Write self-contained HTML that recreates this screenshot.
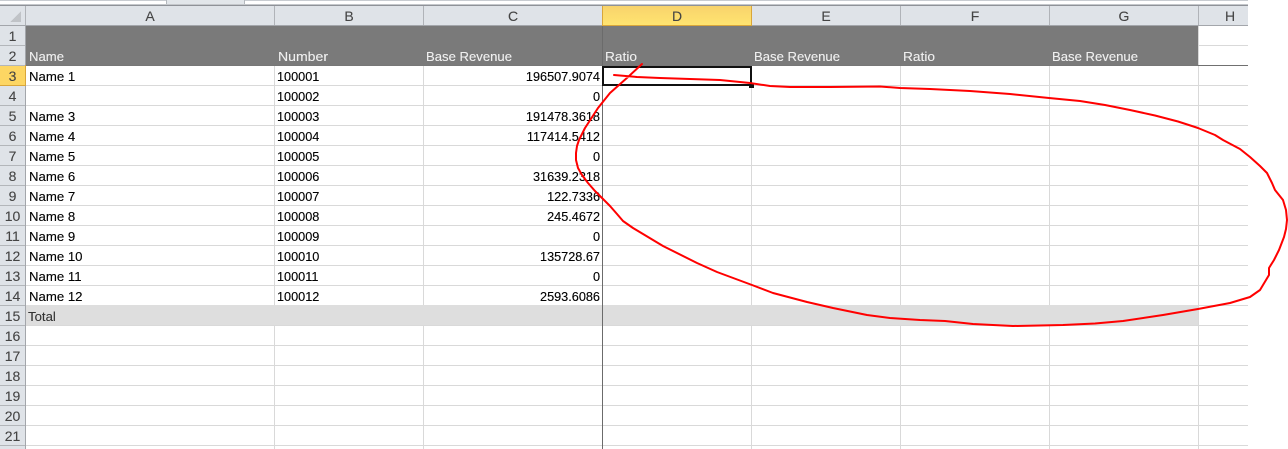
<!DOCTYPE html>
<html><head><meta charset="utf-8"><style>
html,body{margin:0;padding:0;background:#fff;width:1288px;height:449px;overflow:hidden}
svg{display:block}
text{font-family:"Liberation Sans",sans-serif;font-size:13.2px}
.h{fill:#f0f0f0;stroke:#f0f0f0;stroke-width:.12}
.c{fill:#000;stroke:#000;stroke-width:.12}
.d{font-size:12.7px}
.r{fill:#444;stroke:#444;stroke-width:.1;text-anchor:middle;font-size:14px}
.n{text-anchor:end}
</style></head><body>
<svg width="1288" height="449" viewBox="0 0 1288 449" xmlns="http://www.w3.org/2000/svg">
<defs>
<linearGradient id="hd" x1="0" y1="0" x2="0" y2="1"><stop offset="0" stop-color="#f8d36c"/><stop offset="1" stop-color="#ffe470"/></linearGradient>
</defs>
<g shape-rendering="crispEdges">
<!-- top strip -->
<rect x="0" y="0" width="1248" height="1" fill="#c8ccd1"/>
<rect x="166" y="0" width="78" height="4" fill="#e2e6ea"/>
<rect x="166" y="0" width="1" height="4" fill="#b4b8bd"/>
<rect x="244" y="0" width="1" height="4" fill="#b4b8bd"/>
<rect x="0" y="4" width="1248" height="1" fill="#c4c7cb"/>
<rect x="0" y="5" width="1248" height="1" fill="#8f9298"/>
<!-- column header -->
<rect x="0" y="6" width="1248" height="19" fill="#dfe3e8"/>
<rect x="0" y="25" width="1248" height="1" fill="#a3a6ab"/>
<rect x="603" y="6" width="148" height="19" fill="url(#hd)"/>
<rect x="602" y="25" width="150" height="1" fill="#d9a63a"/>
<rect x="602" y="6" width="1" height="19" fill="#d9a63a"/>
<rect x="751" y="6" width="1" height="19" fill="#d9a63a"/>
<rect x="274" y="6" width="1" height="19" fill="#b0b3b8"/>
<rect x="423" y="6" width="1" height="19" fill="#b0b3b8"/>
<rect x="900" y="6" width="1" height="19" fill="#b0b3b8"/>
<rect x="1049" y="6" width="1" height="19" fill="#b0b3b8"/>
<rect x="1198" y="6" width="1" height="19" fill="#b0b3b8"/>
<rect x="25" y="6" width="1" height="19" fill="#b0b3b8"/>
<polygon points="10,22 21,22 21,11" fill="#c0c3c7"/>
<!-- row header -->
<rect x="0" y="26" width="25" height="423" fill="#dfe3e8"/>
<rect x="25" y="26" width="1" height="423" fill="#a3a6ab"/>
<rect x="0" y="66" width="25" height="19" fill="#fdd663"/>
<rect x="25" y="65" width="1" height="21" fill="#d9a63a"/>
<rect x="0" y="85" width="26" height="1" fill="#d9a63a"/>
<g fill="#b3b6ba">
<rect x="0" y="45" width="25" height="1"/><rect x="0" y="65" width="25" height="1"/>
<rect x="0" y="105" width="25" height="1"/><rect x="0" y="125" width="25" height="1"/>
<rect x="0" y="145" width="25" height="1"/><rect x="0" y="165" width="25" height="1"/>
<rect x="0" y="185" width="25" height="1"/><rect x="0" y="205" width="25" height="1"/>
<rect x="0" y="225" width="25" height="1"/><rect x="0" y="245" width="25" height="1"/>
<rect x="0" y="265" width="25" height="1"/><rect x="0" y="285" width="25" height="1"/>
<rect x="0" y="305" width="25" height="1"/><rect x="0" y="325" width="25" height="1"/>
<rect x="0" y="345" width="25" height="1"/><rect x="0" y="365" width="25" height="1"/>
<rect x="0" y="385" width="25" height="1"/><rect x="0" y="405" width="25" height="1"/>
<rect x="0" y="425" width="25" height="1"/><rect x="0" y="445" width="25" height="1"/>
</g>
<!-- gridlines -->
<g fill="#d9d9d9">
<rect x="1198" y="45" width="50" height="1"/>
<rect x="26" y="85" width="1222" height="1"/><rect x="26" y="105" width="1222" height="1"/>
<rect x="26" y="125" width="1222" height="1"/><rect x="26" y="145" width="1222" height="1"/>
<rect x="26" y="165" width="1222" height="1"/><rect x="26" y="185" width="1222" height="1"/>
<rect x="26" y="205" width="1222" height="1"/><rect x="26" y="225" width="1222" height="1"/>
<rect x="26" y="245" width="1222" height="1"/><rect x="26" y="265" width="1222" height="1"/>
<rect x="26" y="285" width="1222" height="1"/><rect x="26" y="305" width="1222" height="1"/>
<rect x="26" y="325" width="1222" height="1"/><rect x="26" y="345" width="1222" height="1"/>
<rect x="26" y="365" width="1222" height="1"/><rect x="26" y="385" width="1222" height="1"/>
<rect x="26" y="405" width="1222" height="1"/><rect x="26" y="425" width="1222" height="1"/>
<rect x="26" y="445" width="1222" height="1"/>
<rect x="274" y="66" width="1" height="383"/><rect x="423" y="66" width="1" height="383"/>
<rect x="751" y="66" width="1" height="383"/><rect x="900" y="66" width="1" height="383"/>
<rect x="1049" y="66" width="1" height="383"/><rect x="1198" y="26" width="1" height="423"/>
</g>
<!-- bands -->
<rect x="26" y="26" width="1172" height="39" fill="#7a7a7a"/>
<rect x="1198" y="65" width="50" height="1" fill="#707070"/>
<rect x="26" y="65" width="1172" height="1" fill="#777"/>
<rect x="26" y="305" width="1172" height="20" fill="#dedede"/>
<rect x="602" y="26" width="1" height="423" fill="#6b6b6b"/>
<!-- selection -->
<rect x="602" y="66" width="150" height="2" fill="#111"/>
<rect x="602" y="84" width="150" height="2" fill="#111"/>
<rect x="602" y="66" width="2" height="20" fill="#111"/>
<rect x="750" y="66" width="2" height="20" fill="#111"/>
<rect x="749" y="84" width="5" height="4" fill="#111"/>
</g>
<!-- column letters -->
<text class="r" x="150" y="21">A</text><text class="r" x="349" y="21">B</text><text class="r" x="513" y="21">C</text>
<text class="r" x="677" y="21">D</text><text class="r" x="826" y="21">E</text><text class="r" x="975" y="21">F</text>
<text class="r" x="1124" y="21">G</text><text class="r" x="1230" y="21">H</text>
<!-- row numbers -->
<text class="r" x="12.5" y="41">1</text><text class="r" x="12.5" y="61">2</text><text class="r" x="12.5" y="81">3</text>
<text class="r" x="12.5" y="101">4</text><text class="r" x="12.5" y="121">5</text><text class="r" x="12.5" y="141">6</text>
<text class="r" x="12.5" y="161">7</text><text class="r" x="12.5" y="181">8</text><text class="r" x="12.5" y="201">9</text>
<text class="r" x="12.5" y="221">10</text><text class="r" x="12.5" y="241">11</text><text class="r" x="12.5" y="261">12</text>
<text class="r" x="12.5" y="281">13</text><text class="r" x="12.5" y="301">14</text><text class="r" x="12.5" y="321">15</text>
<text class="r" x="12.5" y="341">16</text><text class="r" x="12.5" y="361">17</text><text class="r" x="12.5" y="381">18</text>
<text class="r" x="12.5" y="401">19</text><text class="r" x="12.5" y="421">20</text><text class="r" x="12.5" y="441">21</text>
<!-- header labels -->
<text class="h" x="29" y="61" textLength="35" lengthAdjust="spacingAndGlyphs">Name</text>
<text class="h" x="278" y="61" textLength="50" lengthAdjust="spacingAndGlyphs">Number</text>
<text class="h" x="426" y="61" textLength="86" lengthAdjust="spacingAndGlyphs">Base Revenue</text>
<text class="h" x="605" y="61" textLength="32" lengthAdjust="spacingAndGlyphs">Ratio</text>
<text class="h" x="754" y="61" textLength="86" lengthAdjust="spacingAndGlyphs">Base Revenue</text>
<text class="h" x="903" y="61" textLength="32" lengthAdjust="spacingAndGlyphs">Ratio</text>
<text class="h" x="1052" y="61" textLength="86" lengthAdjust="spacingAndGlyphs">Base Revenue</text>
<!-- names -->
<text class="c" x="29" y="81">Name 1</text><text class="c" x="29" y="121">Name 3</text><text class="c" x="29" y="141">Name 4</text>
<text class="c" x="29" y="161">Name 5</text><text class="c" x="29" y="181">Name 6</text><text class="c" x="29" y="201">Name 7</text>
<text class="c" x="29" y="221">Name 8</text><text class="c" x="29" y="241">Name 9</text><text class="c" x="29" y="261">Name 10</text>
<text class="c" x="29" y="281">Name 11</text><text class="c" x="29" y="301">Name 12</text>
<text x="28" y="321" fill="#333" stroke="#333" stroke-width=".1">Total</text>
<!-- numbers -->
<text class="c d" x="277" y="81">100001</text><text class="c d" x="277" y="101">100002</text><text class="c d" x="277" y="121">100003</text>
<text class="c d" x="277" y="141">100004</text><text class="c d" x="277" y="161">100005</text><text class="c d" x="277" y="181">100006</text>
<text class="c d" x="277" y="201">100007</text><text class="c d" x="277" y="221">100008</text><text class="c d" x="277" y="241">100009</text>
<text class="c d" x="277" y="261">100010</text><text class="c d" x="277" y="281">100011</text><text class="c d" x="277" y="301">100012</text>
<!-- revenue -->
<text class="c d n" x="600" y="81">196507.9074</text><text class="c d n" x="600" y="101">0</text><text class="c d n" x="600" y="121">191478.3618</text>
<text class="c d n" x="600" y="141">117414.5412</text><text class="c d n" x="600" y="161">0</text><text class="c d n" x="600" y="181">31639.2318</text>
<text class="c d n" x="600" y="201">122.7336</text><text class="c d n" x="600" y="221">245.4672</text><text class="c d n" x="600" y="241">0</text>
<text class="c d n" x="600" y="261">135728.67</text><text class="c d n" x="600" y="281">0</text><text class="c d n" x="600" y="301">2593.6086</text>
<!-- red annotation -->
<path fill="none" stroke="#f00" stroke-width="2" stroke-linejoin="round" stroke-linecap="round" d="M614 75 L637 77 L660 78 L690 79 L720 80 L750 83 L770 86 L790 87 L830 87 L880 86.5 L900 88 L930 89 L970 91 L1010 94 L1049 98 L1080 101 L1105 105 L1130 110 L1155 115.5 L1178 121.5 L1198 128 L1215 135 L1223 140 L1240 149 L1250 157 L1260 166 L1267 173 L1272 183 L1275 190 L1283 200 L1286 210 L1287 220 L1286 229 L1284 237 L1279 250 L1274 260 L1269 268 L1269 275 L1260 290 L1250 297 L1230 303 L1198 309 L1163 315 L1123 321 L1095 323.5 L1063 325 L1013 326 L973 324 L945 321 L920 320 L890 318 L867 315 L833 308 L807 302 L773 293 L752 285 L717 272 L697 263 L663 246 L633 228 L623 221 L617 214 L610 206 L603 199 L595 191 L588 183 L582 175 L578 168 L576 160 L576 153 L577 146 L579 140 L585 128 L598 108 L610 93 L628 77 L642 64"/>
</svg>
</body></html>
